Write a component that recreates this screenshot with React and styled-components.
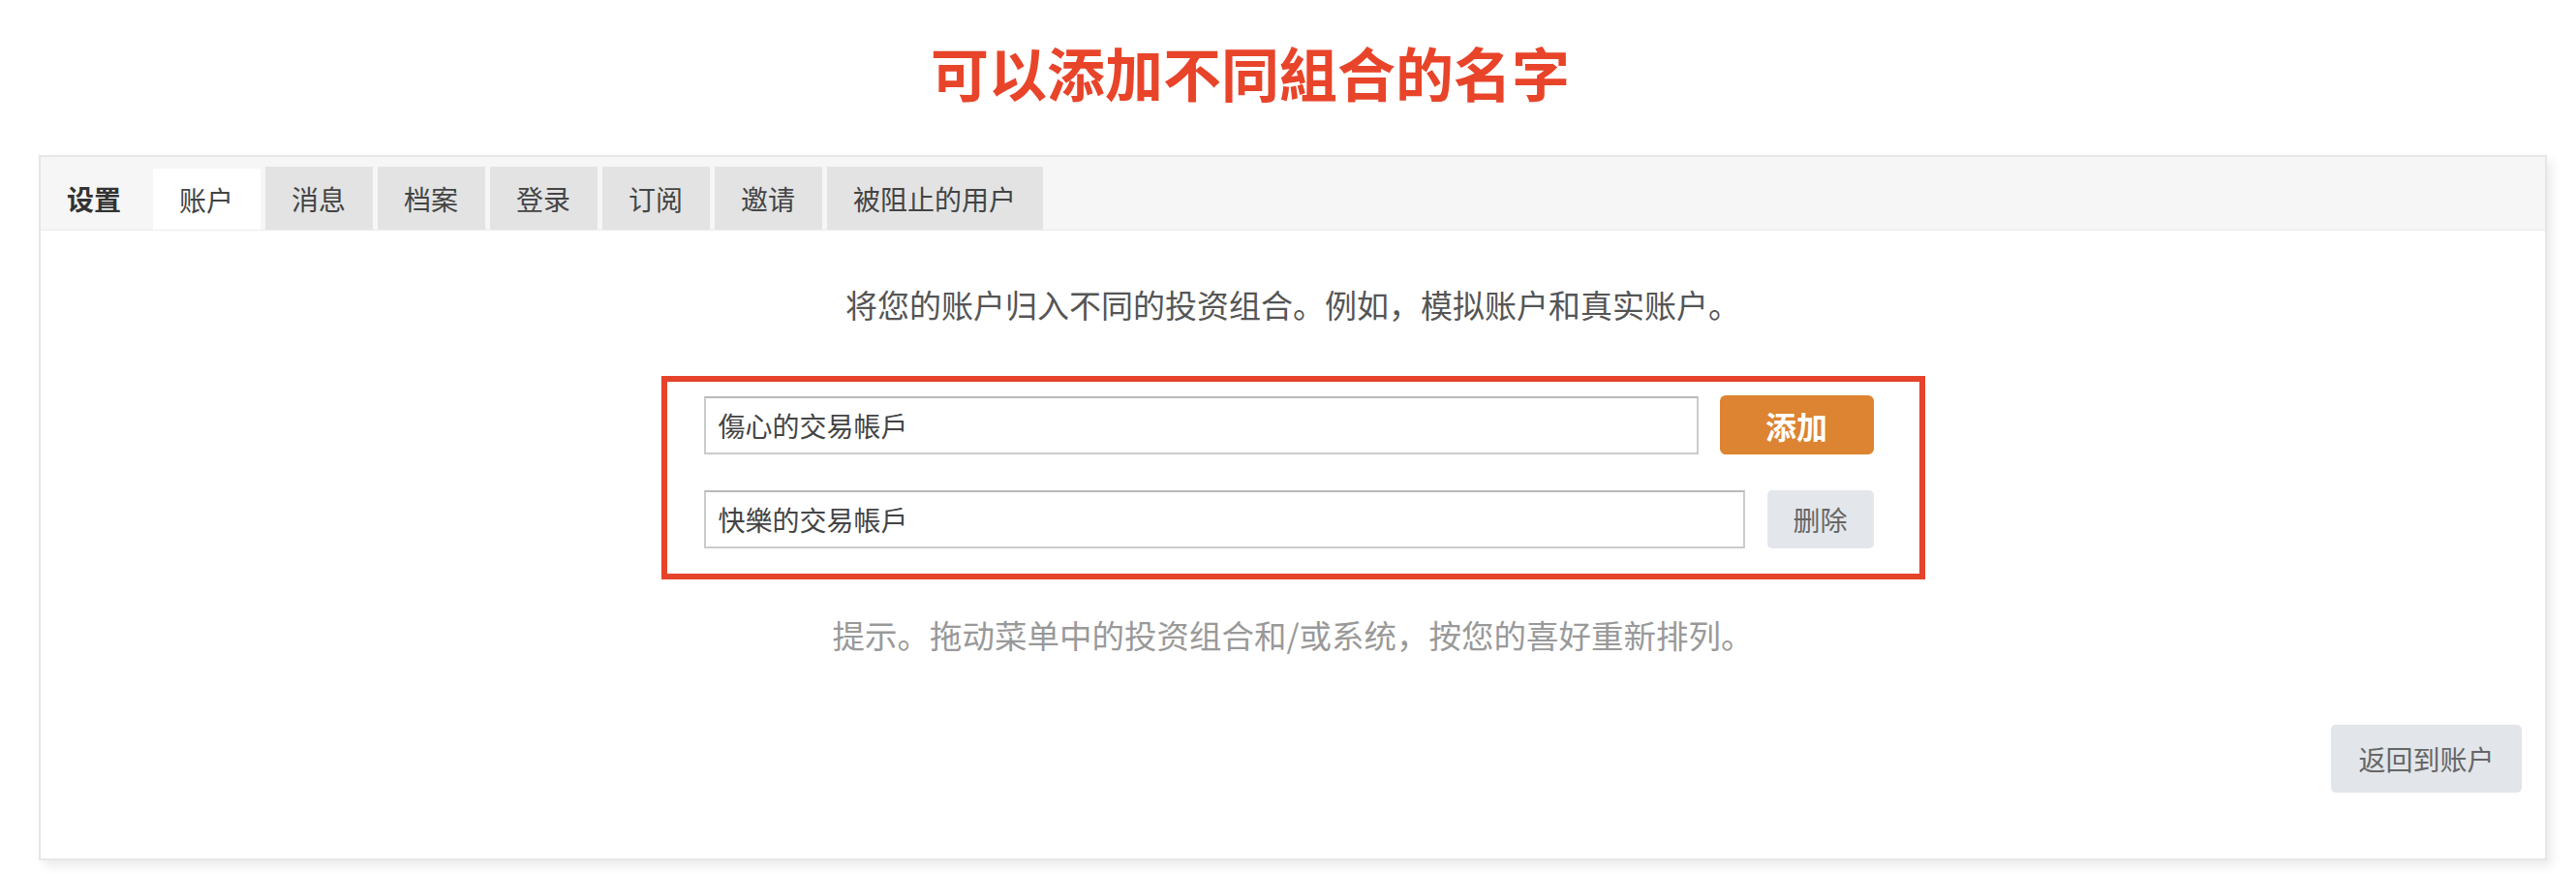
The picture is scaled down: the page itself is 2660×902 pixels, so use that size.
import React, { useState } from "react";
import styled, { createGlobalStyle } from "styled-components";

const GlobalStyle = createGlobalStyle`
  body {
    margin: 0;
    background: #fff;
    font-family: "Noto Sans CJK SC", "Noto Sans", sans-serif;
  }
`;

const tabs = ["设置", "账户", "消息", "档案", "登录", "订阅", "邀请", "被阻止的用户"];

function App() {
  const [names, setNames] = useState(["傷心的交易帳戶", "快樂的交易帳戶"]);

  const setName = (i, v) => {
    const next = [...names];
    next[i] = v;
    setNames(next);
  };

  return (
    <Page>
      <GlobalStyle />
      <Title>可以添加不同組合的名字</Title>
      <Panel>
        <TabBar>
          {tabs.map((t, i) => (
            <Tab key={t} kind={i === 0 ? "label" : i === 1 ? "active" : "idle"}>
              {t}
            </Tab>
          ))}
        </TabBar>
        <Body>
          <Intro>将您的账户归入不同的投资组合。例如，模拟账户和真实账户。</Intro>
          <Highlight>
            <Row>
              <NameInput value={names[0]} onChange={(e) => setName(0, e.target.value)} />
              <AddButton>添加</AddButton>
            </Row>
            <Row>
              <NameInput value={names[1]} onChange={(e) => setName(1, e.target.value)} />
              <GreyButton>删除</GreyButton>
            </Row>
          </Highlight>
          <Hint>提示。拖动菜单中的投资组合和/或系统，按您的喜好重新排列。</Hint>
          <Footer>
            <BackButton>返回到账户</BackButton>
          </Footer>
        </Body>
      </Panel>
    </Page>
  );
}

const Page = styled.div`
  padding-top: 44px;
  width: 2660px;
  height: 902px;
  box-sizing: border-box;
`;

const Title = styled.h1`
  margin: 0 0 56px 0;
  padding-right: 78px;
  text-align: center;
  font-size: 60px;
  line-height: 60px;
  font-weight: 700;
  color: #e8442a;
`;

const Panel = styled.section`
  margin: 0 30px 0 40px;
  border: 2px solid #e6e6e6;
  background: #fff;
  box-shadow: 5px 6px 10px rgba(0, 0, 0, 0.08);
`;

const TabBar = styled.nav`
  display: flex;
  align-items: flex-end;
  gap: 5px;
  height: 65px;
  padding-top: 10px;
  background: #f6f6f6;
  border-bottom: 1px solid #ebebeb;
`;

const Tab = styled.div`
  display: flex;
  align-items: center;
  height: ${(p) => (p.kind === "active" ? "63px" : "65px")};
  padding: 0 27.5px 0 ${(p) => (p.kind === "label" ? "27px" : "27.5px")};
  font-size: 28px;
  color: ${(p) => (p.kind === "label" ? "#333" : "#444")};
  font-weight: ${(p) => (p.kind === "label" ? 600 : 400)};
  background: ${(p) =>
    p.kind === "active" ? "#fff" : p.kind === "idle" ? "#e3e3e3" : "transparent"};
`;

const Body = styled.div`
  display: flex;
  flex-direction: column;
  align-items: center;
  padding: 56px 24px 68px 24px;
`;

const Intro = styled.p`
  margin: 0;
  font-size: 33px;
  line-height: 40px;
  color: #555;
`;

const Highlight = styled.div`
  display: flex;
  flex-direction: column;
  gap: 37px;
  width: 1305px;
  box-sizing: border-box;
  margin-top: 54px;
  padding: 14px 47px 26px 38px;
  border: 6px solid #e5432a;
`;

const Row = styled.div`
  display: flex;
  align-items: center;
  gap: 22px;
`;

const NameInput = styled.input`
  flex: 1;
  height: 60px;
  box-sizing: border-box;
  padding: 0 13px;
  border: 2px solid #cbcbcb;
  border-top-color: #b9b9b9;
  font-family: inherit;
  font-size: 28px;
  color: #444;
  outline: none;
`;

const AddButton = styled.button`
  width: 159px;
  height: 61px;
  border: none;
  border-radius: 6px;
  background: #dc8431;
  color: #fff;
  font-family: inherit;
  font-size: 32px;
  font-weight: 700;
`;

const GreyButton = styled.button`
  width: 110px;
  height: 60px;
  margin-left: 1px;
  border: none;
  border-radius: 5px;
  background: #e3e6ea;
  color: #666;
  font-family: inherit;
  font-size: 28px;
`;

const Hint = styled.p`
  margin: 37px 0 0 0;
  font-size: 33.5px;
  line-height: 40px;
  color: #999;
`;

const Footer = styled.div`
  display: flex;
  justify-content: flex-end;
  align-self: stretch;
  margin-top: 73px;
`;

const BackButton = styled.button`
  width: 197px;
  height: 70px;
  border: none;
  border-radius: 5px;
  background: #e2e5e9;
  color: #666;
  font-family: inherit;
  font-size: 28px;
`;

export default App;
